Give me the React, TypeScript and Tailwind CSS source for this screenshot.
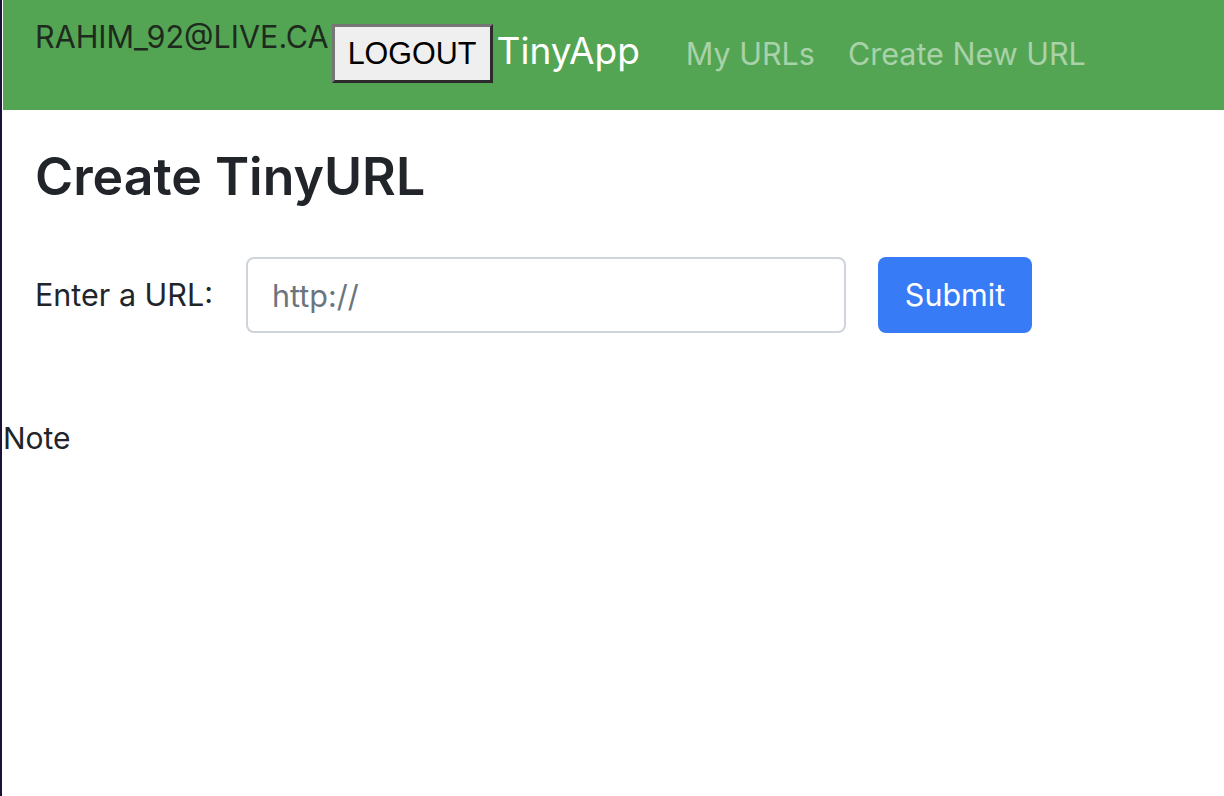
const App = () => {
  return (
    <div className="flex h-[796px] w-[1224px] bg-white font-['Inter','Noto_Sans',sans-serif] text-[#212529]">
      {/* window edge */}
      <div className="w-[2px] shrink-0 bg-[#1c1138]"></div>

      <div className="flex-1 pl-px">
        {/* Top bar */}
        <nav className="flex h-[110px] items-start bg-[#53a553] pl-[32px]">
          <span className="mt-[19px] text-[30.5px] leading-[36px] text-[#1f2a1f]">RAHIM_92@LIVE.CA</span>
          <button className="mt-[24px] ml-[3px] h-[59px] w-[161px] border-[3px] border-t-[#767676] border-l-[#767676] border-b-[#2b2b2b] border-r-[#2b2b2b] bg-[#efefef] font-['Liberation_Sans',Arial,sans-serif] text-[30.5px] text-black">
            LOGOUT
          </button>
          <span className="mt-[29px] ml-[4px] text-[37px] leading-[44px] text-white">TinyApp</span>
          <a className="mt-[36px] ml-[46px] text-[30.5px] leading-[36px] text-white/50">My URLs</a>
          <a className="mt-[36px] ml-[33px] text-[30.5px] leading-[36px] text-white/50">Create New URL</a>
        </nav>

        {/* Create form */}
        <main className="pl-[32px] pt-[32px]">
          <h1 className="text-[51.8px] leading-[68px] font-semibold">Create TinyURL</h1>

          <form className="mt-[47px] flex items-center">
            <label className="w-[211px] text-[30.5px] leading-[36px]">Enter a URL:</label>
            <input
              type="text"
              placeholder="http://"
              className="h-[76px] w-[600px] rounded-[8px] border-2 border-[#ced4da] px-[24px] text-[30.5px] text-[#495057] placeholder:text-[#6c757d]"
            />
            <button
              type="submit"
              className="ml-[32px] h-[76px] w-[154px] rounded-[8px] bg-[#377cf6] text-[30.5px] text-white"
            >
              Submit
            </button>
          </form>
        </main>

        <p className="mt-[87px] text-[30px] leading-[36px]">Note</p>
      </div>
    </div>
  )
}

export default App
